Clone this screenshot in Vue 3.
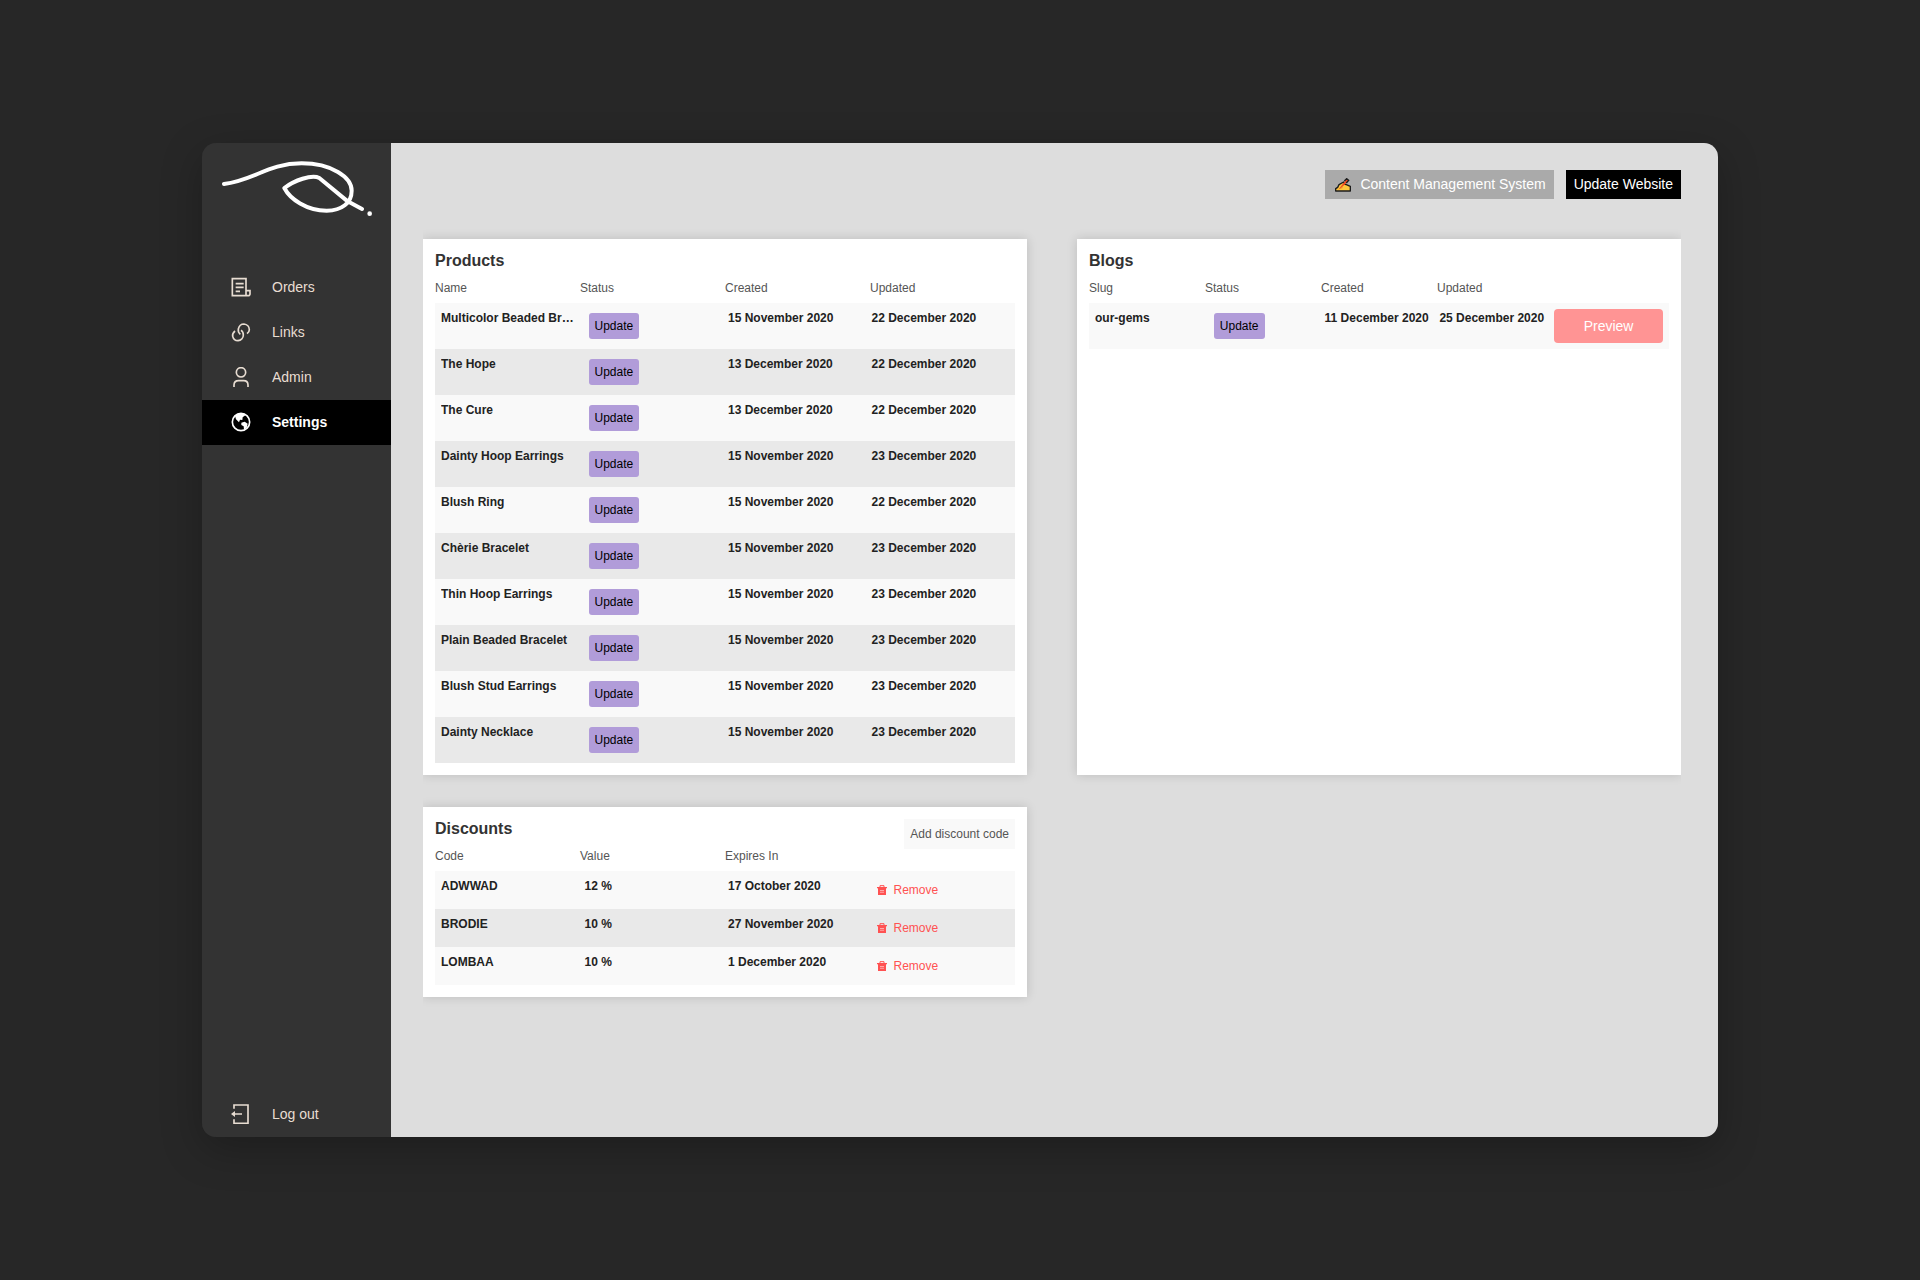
<script setup>
const products = [
  { name: 'Multicolor Beaded Bracelet', created: '15 November 2020', updated: '22 December 2020' },
  { name: 'The Hope', created: '13 December 2020', updated: '22 December 2020' },
  { name: 'The Cure', created: '13 December 2020', updated: '22 December 2020' },
  { name: 'Dainty Hoop Earrings', created: '15 November 2020', updated: '23 December 2020' },
  { name: 'Blush Ring', created: '15 November 2020', updated: '22 December 2020' },
  { name: 'Chèrie Bracelet', created: '15 November 2020', updated: '23 December 2020' },
  { name: 'Thin Hoop Earrings', created: '15 November 2020', updated: '23 December 2020' },
  { name: 'Plain Beaded Bracelet', created: '15 November 2020', updated: '23 December 2020' },
  { name: 'Blush Stud Earrings', created: '15 November 2020', updated: '23 December 2020' },
  { name: 'Dainty Necklace', created: '15 November 2020', updated: '23 December 2020' },
]
const blogs = [{ slug: 'our-gems', created: '11 December 2020', updated: '25 December 2020' }]
const discounts = [
  { code: 'ADWWAD', value: '12 %', expires: '17 October 2020' },
  { code: 'BRODIE', value: '10 %', expires: '27 November 2020' },
  { code: 'LOMBAA', value: '10 %', expires: '1 December 2020' },
]
</script>

<template>
  <div class="page">
    <div class="window">
      <aside class="sidebar">
        <svg class="logo" viewBox="96 90 456 174" fill="none" stroke="#fff" stroke-width="12" stroke-linecap="round" stroke-linejoin="round" aria-hidden="true">
          <path d="M102 165C190 155 235 103 335 103C425 103 485 145 485 185C485 222 455 245 410 245C350 245 300 210 283 177C312 155 365 135 388 147L473 217L516 240" />
          <circle cx="539" cy="254" r="7" fill="#fff" stroke="none" />
        </svg>
        <nav class="menu">
          <a href="#orders" class="item">
            <svg class="icon" viewBox="93 50 60 60" aria-hidden="true">
              <path d="M138 90V55H97V106H144a5 5 0 0 0 6-5V91H138V104M107 70H131M107 81H131M107 93H120" />
            </svg>
            Orders
          </a>
          <a href="#links" class="item">
            <svg class="icon" viewBox="93 185 60 60" aria-hidden="true">
              <path d="M105 212C99 217 97 223 98 228C100 236 107 241 114 241C123 240 130 233 130 224C130 218 128 213 123 210M121 222C116 218 114 212 115 206C117 197 124 191 132 191C141 192 148 199 148 208C148 213 145 217 141 220" />
            </svg>
            Links
          </a>
          <a href="#admin" class="item">
            <svg class="icon" viewBox="93 320 60 60" aria-hidden="true">
              <circle cx="123" cy="336" r="14" />
              <path d="M102 380V374C102 366 108 361 116 361H131C139 361 144 366 144 374V380" />
            </svg>
            Admin
          </a>
          <a href="#settings" class="item active" aria-current="page">
            <svg class="icon" viewBox="93 456 60 60" aria-hidden="true">
              <circle cx="123" cy="486" r="26" />
              <path d="M105 468L116 460H132L136 466L128 472L127 480L120 479L117 487L108 478ZM124 488L134 485L143 491L140 503L132 509L131 499L124 495Z" fill="currentColor" stroke="none" />
            </svg>
            Settings
          </a>
          <a href="#logout" class="item logout">
            <svg class="icon" viewBox="93 72 60 60" aria-hidden="true">
              <path d="M102 86V75H144V130H102V118M99 102H126" />
              <path d="M93 102L105 93V111Z" fill="currentColor" stroke="none" />
            </svg>
            Log out
          </a>
        </nav>
      </aside>

      <main class="main">
        <header class="toolbar">
          <button type="button" class="tool cms">
            <svg class="hand" viewBox="0 0 48 42" aria-hidden="true">
              <path d="M2 39V32L8 28L12 20L26 12L30 19L34 20L46 25V39Z" fill="#fdc63c" stroke="#1c1c1c" stroke-width="4" stroke-linejoin="round" />
              <path d="M10 35L35 3L41 8L18 30Z" fill="#ef4823" />
              <path d="M28 9L35 2L41 7L34 15" fill="none" stroke="#1c1c1c" stroke-width="4" />
              <path d="M13 32L23 25L22 31Z" fill="#f08a24" />
            </svg>
            Content Management System
          </button>
          <button type="button" class="tool publish">Update Website</button>
        </header>

        <div class="cards">
          <section class="card">
            <div class="head"><h2>Products</h2></div>
            <table class="cols4">
              <thead>
                <tr><th>Name</th><th>Status</th><th>Created</th><th>Updated</th></tr>
              </thead>
              <tbody>
                <tr v-for="p in products" :key="p.name">
                  <td class="name">{{ p.name }}</td>
                  <td class="action"><button type="button" class="update">Update</button></td>
                  <td>{{ p.created }}</td>
                  <td>{{ p.updated }}</td>
                </tr>
              </tbody>
            </table>
          </section>

          <section class="card">
            <div class="head"><h2>Blogs</h2></div>
            <table class="cols5">
              <thead>
                <tr><th>Slug</th><th>Status</th><th>Created</th><th>Updated</th></tr>
              </thead>
              <tbody>
                <tr v-for="b in blogs" :key="b.slug">
                  <td class="name">{{ b.slug }}</td>
                  <td class="action"><button type="button" class="update">Update</button></td>
                  <td>{{ b.created }}</td>
                  <td>{{ b.updated }}</td>
                  <td class="action"><button type="button" class="preview">Preview</button></td>
                </tr>
              </tbody>
            </table>
          </section>

          <section class="card">
            <div class="head">
              <h2>Discounts</h2>
              <button type="button" class="add">Add discount code</button>
            </div>
            <table class="cols4 compact">
              <thead>
                <tr><th>Code</th><th>Value</th><th>Expires In</th></tr>
              </thead>
              <tbody>
                <tr v-for="d in discounts" :key="d.code">
                  <td class="name">{{ d.code }}</td>
                  <td>{{ d.value }}</td>
                  <td>{{ d.expires }}</td>
                  <td class="action">
                    <button type="button" class="remove">
                      <svg class="trash" viewBox="0 0 30 30" aria-hidden="true">
                        <path d="M9 7V2H21V7" fill="none" stroke="currentColor" stroke-width="3" />
                        <path d="M0 6H30V10H27V30H3V10H0Z" fill="currentColor" />
                        <path d="M9 15H21V18H9ZM9 20H21V23H9Z" fill="#fff" opacity=".5" />
                      </svg>
                      Remove
                    </button>
                  </td>
                </tr>
              </tbody>
            </table>
          </section>
        </div>
      </main>
    </div>
  </div>
</template>

<style>
body {
  background: #272727;
}
</style>

<style scoped>
.page {
  box-sizing: border-box;
  min-height: 100vh;
  padding: 143px 202px;
  display: flex;
  font-family: "Liberation Sans", Arial, sans-serif;
  font-size: 12px;
  line-height: 14px;
}
button {
  font: inherit;
  border: 0;
  margin: 0;
  padding: 0;
  cursor: pointer;
}
.window {
  flex: 1;
  display: flex;
  border-radius: 14px;
  overflow: hidden;
  box-shadow: 0 12px 40px rgba(0, 0, 0, 0.25);
}
.sidebar {
  width: 189px;
  flex: none;
  display: flex;
  flex-direction: column;
  background: #333;
}
.logo {
  width: 152px;
  height: 58px;
  margin: 16px 0 48px 20px;
}
.menu {
  flex: 1;
  display: flex;
  flex-direction: column;
}
.item {
  box-sizing: border-box;
  display: flex;
  align-items: center;
  gap: 21px;
  height: 45px;
  padding: 0 0 2px 29px;
  font-size: 14px;
  color: #e8ddd2;
  text-decoration: none;
}
.item.active {
  background: #000;
  color: #fff;
  font-weight: bold;
}
.logout {
  margin-top: auto;
}
.icon {
  width: 20px;
  height: 20px;
  fill: none;
  stroke: currentColor;
  stroke-width: 5;
}
.main {
  flex: 1;
  min-width: 0;
  padding: 27px 37px 32px 32px;
  background: #ddd;
}
.toolbar {
  display: flex;
  justify-content: flex-end;
  gap: 12px;
  margin-bottom: 40px;
}
.tool {
  display: flex;
  align-items: center;
  height: 29px;
  padding: 0 8px 2px;
  font-size: 14px;
  color: #fff;
}
.cms {
  gap: 9px;
  padding-left: 10px;
  background: #aaa;
}
.hand {
  width: 16px;
  height: 14px;
  margin-top: 2px;
}
.publish {
  background: #000;
}
.cards {
  display: grid;
  grid-template-columns: 1fr 1fr;
  gap: 32px 50px;
  clip-path: inset(-20px 0);
}
.card {
  min-width: 0;
  padding: 12px;
  background: #fff;
  box-shadow: 0 0 10px rgba(0, 0, 0, 0.15);
}
.head {
  display: flex;
  justify-content: space-between;
  align-items: flex-start;
  height: 30px;
}
h2 {
  margin: 0;
  font-size: 16px;
  line-height: 20px;
  color: #333;
}
table,
thead,
tbody {
  display: block;
}
tr {
  display: grid;
}
.cols4 tr {
  grid-template-columns: repeat(4, minmax(0, 1fr));
}
.cols5 tr {
  grid-template-columns: repeat(5, minmax(0, 1fr));
}
th {
  padding: 0 0 8px;
  font-weight: normal;
  text-align: left;
  color: #555;
}
tbody tr {
  height: 46px;
  padding-left: 6px;
  background: #f9f9f9;
}
tbody tr:nth-child(even) {
  background: #e9e9e9;
}
.compact tbody tr {
  height: 38px;
}
td {
  padding: 8px 0 0;
  font-weight: bold;
  color: #222;
  white-space: nowrap;
}
.name {
  margin-right: 6px;
  overflow: hidden;
  text-overflow: ellipsis;
}
.action {
  display: flex;
  align-items: center;
  padding: 0;
  font-weight: normal;
}
.update {
  height: 26px;
  margin-left: 4px;
  padding: 0 6px;
  border-radius: 3px;
  background: #b19cd9;
  color: #000;
}
.preview {
  flex: 1;
  height: 34px;
  margin-right: 6px;
  border-radius: 4px;
  background: #ff9494;
  color: #fff;
  font-size: 14px;
}
.add {
  height: 30px;
  padding: 0 6px;
  background: #f9f9f9;
  color: #555;
}
.remove {
  display: flex;
  align-items: center;
  gap: 7px;
  padding-left: 5px;
  background: none;
  color: #ff5252;
}
.trash {
  width: 10px;
  height: 10px;
}
</style>
